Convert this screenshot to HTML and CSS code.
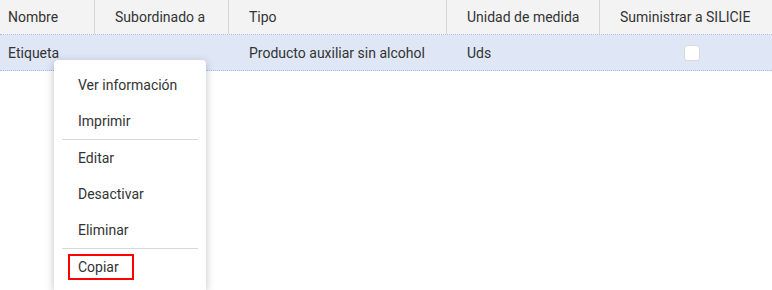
FILE: index.html
```html
<!DOCTYPE html>
<html lang="es">
<head>
<meta charset="utf-8">
<link rel="stylesheet" href="styles.css">
</head>
<body>
<div class="grid">
  <div class="row head">
    <div class="cell c1">Nombre</div>
    <div class="cell c2">Subordinado a</div>
    <div class="cell c3">Tipo</div>
    <div class="cell c4">Unidad de medida</div>
    <div class="cell c5">Suministrar a SILICIE</div>
  </div>
  <div class="row data">
    <div class="cell c1">Etiqueta</div>
    <div class="cell c2"></div>
    <div class="cell c3">Producto auxiliar sin alcohol</div>
    <div class="cell c4">Uds</div>
    <div class="cell c5"><span class="check"></span></div>
  </div>
</div>
<div class="menu">
  <div class="item">Ver información</div>
  <div class="item">Imprimir</div>
  <div class="sep"></div>
  <div class="item">Editar</div>
  <div class="item">Desactivar</div>
  <div class="item">Eliminar</div>
  <div class="sep"></div>
  <div class="item"><span class="hl">Copiar</span></div>
</div>
</body>
</html>
```
FILE: styles.css
```css
html, body { margin: 0; padding: 0; }
body {
  width: 772px; height: 290px; overflow: hidden; background: #fff;
  font-family: Roboto, "Liberation Sans", sans-serif; font-size: 14px; color: #333;
  position: relative;
}
.row { display: flex; }
.head { height: 34px; background: #f3f3f3; border-bottom: 1px dotted #a8bce8; }
.data { height: 35px; background: #dfe7f6; border-bottom: 1px dotted #a8bce8; }
.cell { display: flex; align-items: center; box-sizing: border-box; padding-left: 8px; }
.head .cell { border-right: 1px solid #d6d6d6; }
.head .c5 { border-right: none; }
.c1 { width: 95px; }
.c2 { width: 134px; padding-left: 20px; }
.c3 { width: 218px; padding-left: 20px; }
.c4 { width: 153px; padding-left: 20px; }
.c5 { flex: 1; padding-left: 20px; }
.data .c5 { padding-left: 84px; }
.check {
  width: 16px; height: 16px; box-sizing: border-box; background: #fff;
  border: 1px solid #d8d8d8; border-radius: 3px;
}
.menu {
  position: absolute; left: 54px; top: 60px; width: 152px; height: 230px;
  background: #fff; border-radius: 4px 4px 0 0;
  box-shadow: 0 2px 8px rgba(0,0,0,0.25);
  padding-top: 7px; box-sizing: border-box; overflow: hidden;
}
.item { height: 36px; display: flex; align-items: center; padding-left: 24px; color: #333; flex-shrink: 0; }
.sep { height: 1px; background: #d8d8d8; margin: 0 8px; }
.hl {
  border: 2px solid #f00; padding: 3px 13px 3px 8px; margin-left: -10px;
}
```
